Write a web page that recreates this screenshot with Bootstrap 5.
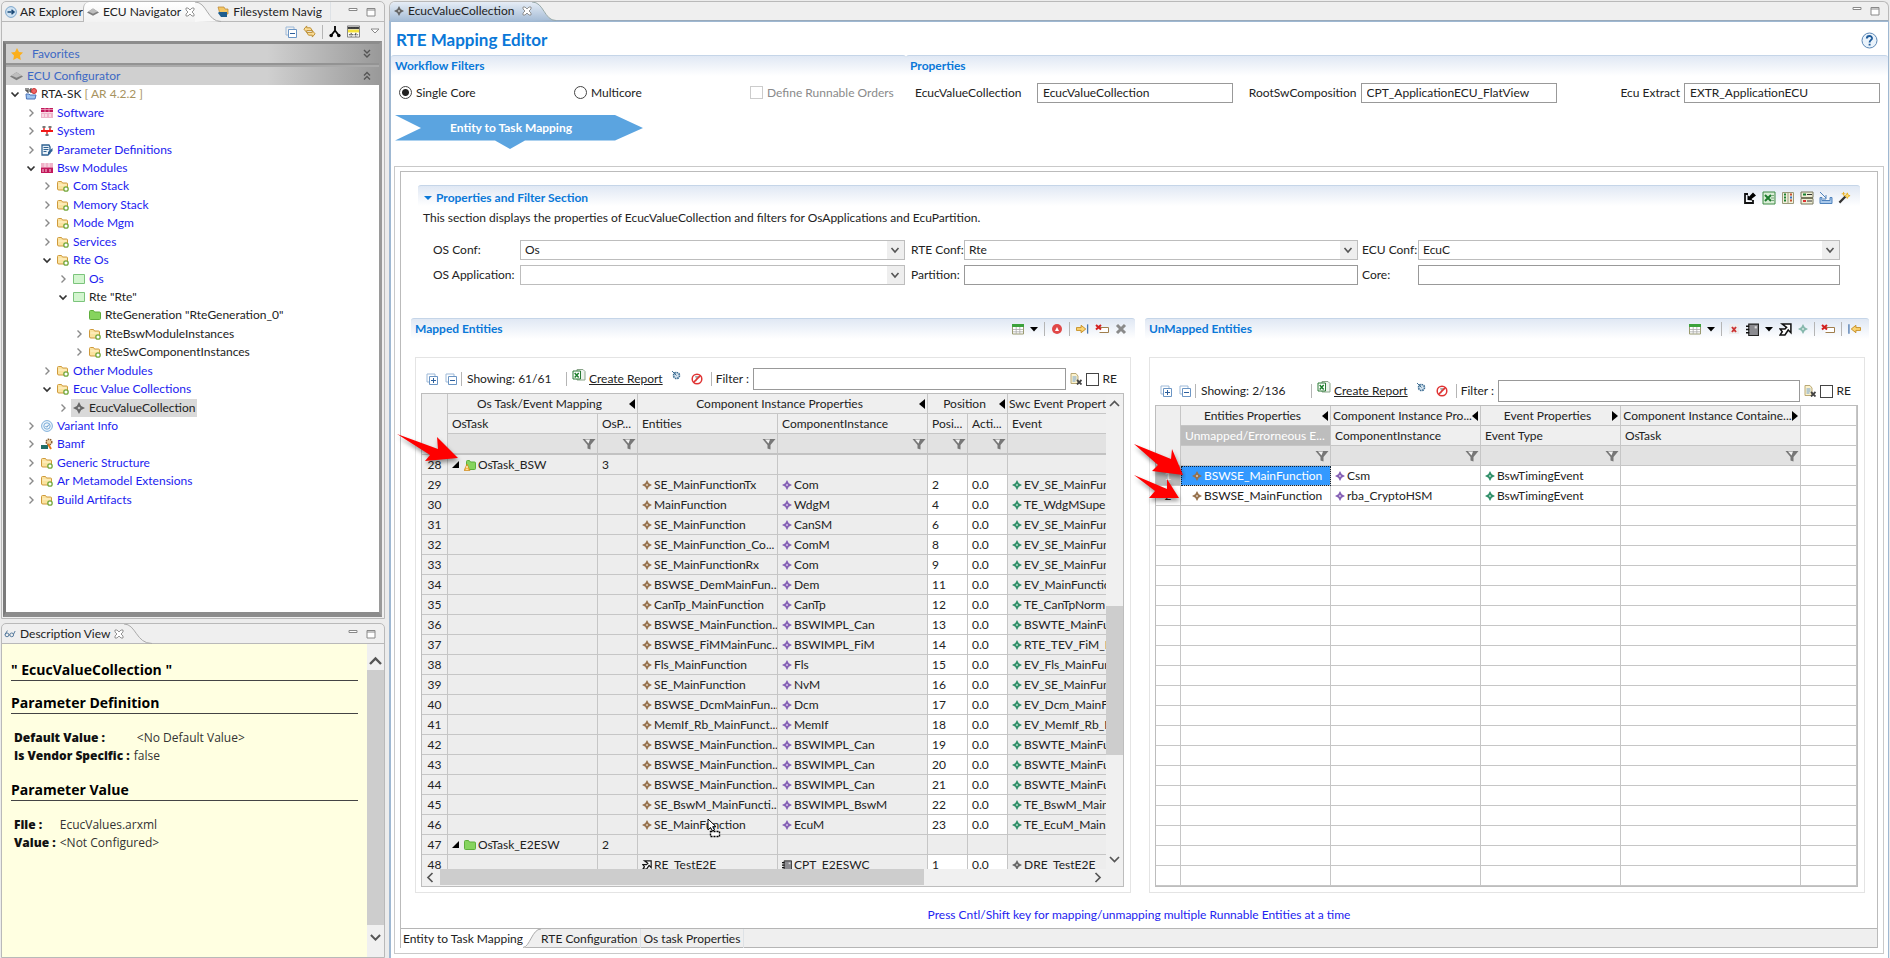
<!DOCTYPE html>
<html lang="en">
<head>
<meta charset="utf-8">
<meta name="viewport" content="width=device-width, initial-scale=1">
<title>RTE Mapping Editor</title>
<link href="https://cdn.jsdelivr.net/npm/bootstrap@5.3.0/dist/css/bootstrap.min.css" rel="stylesheet">
<style>
:root{--ui:Lato,"Open Sans",sans-serif;--doc:"Open Sans","Noto Sans",sans-serif;--head:#0a78d8}
body{font:12px/18px var(--ui);color:#222;background:#ececec;height:100vh;overflow:hidden}
svg{display:block;flex:none}
h1,h2,h3,p{margin:0}
button{border:0;background:none;padding:0;color:inherit}
a{color:inherit}
/* side column */
.side{flex:0 0 385px;padding:1px 0 0 1px}
.pane{border:1px solid #b9b9b9;border-radius:5px 5px 0 0;background:#efefef;width:384px}
.pane-nav{height:618px}
.strip{height:20px;border-bottom:1px solid #b9b9b9;line-height:20px;font-size:12px;white-space:nowrap}
.strip .on{background:linear-gradient(#fff,#f2f2f2);border-left:1px solid #b9b9b9;border-radius:6px 0 0 0;height:20px}
.toolrow{height:19px}
.sep{width:1px;height:14px;background:#b5b5b5;flex:none}
.shell{border:3px solid #8c8c8c;border-left-color:#7a7a7a;border-right-color:#9a9a9a;border-bottom-width:5px;background:#fff;margin:0 2px 1px 1px}
.drawer{height:21px;background:linear-gradient(90deg,#d0d0d0 70%,#9a9a9a);color:#3d69c4;line-height:20px;border-bottom:2px solid #939393;padding-left:4px}
.drawer + .drawer{border-bottom:0;border-top:2px solid #aaa;height:20px}
.tree{list-style:none;margin:0;padding:0;height:424px;display:grid;grid-auto-rows:1fr}
.tree li{display:flex;align-items:center;gap:4px;color:#1c1cf0;white-space:nowrap;padding-left:calc(3px + 16px * var(--lv))}
.tree .blk{color:#222}
.tree svg{width:12px;height:12px}
.tree .tw{color:#8a8a8a}
.tree .open{color:#333}
.picked{background:#d9d9d9;height:18px;padding:0 2px}
.note{background:#ffffe1;flex:1;padding:16px 8px 0 9px;color:#333;line-height:18px;font-family:var(--doc)}
.note h2{font-size:14px;line-height:20px;font-weight:700;color:#000;border-bottom:1px solid #444;margin-bottom:12px;width:347px;white-space:pre}
.note dl{margin:0 0 15px 3px;display:grid;grid-template-columns:max-content 1fr;column-gap:4px;padding-top:3px}
.note dt,.note dd{margin:0;white-space:nowrap}
.note dt{color:#111}
/* editor */
.ed{flex:1 1 0;min-width:0;margin:1px 1px 0 4px}
.edstrip{height:20px;border:1px solid #b9b9b9;border-bottom-color:#9ab;border-radius:6px 6px 0 0;background:#efefef}
.edtab{background:linear-gradient(#e6edf6,#a5bcd6);height:19px;line-height:18px;border-radius:5px 0 0 0}
.edbody{background:#fff;border:2px solid #9fb8d2;border-right-width:1px;border-top-width:1px;border-bottom-color:#9fb8d2}
.edbody h1{font:700 17px/33px var(--ui);padding-top:1px;height:33px;color:var(--head)}
.band{height:21px;background:linear-gradient(#e0e8f4,#fff);border-top:1px solid #c5d5e8;border-radius:3px 3px 0 0;color:var(--head);font:700 12px/20px var(--ui)}
.fld{height:20px;border:1px solid #999;border-radius:0;padding:0 5px;font:12px/18px var(--ui);color:#222;background:#fff;min-width:0;outline:0;width:100%}
select.fld{appearance:none;border-color:#bdbdbd;padding-left:4px;background:#fff url("data:image/svg+xml,%3Csvg xmlns='http://www.w3.org/2000/svg' width='17' height='18'%3E%3Cpath d='M0 0h17v18H0z' fill='%23eee'/%3E%3Cpath d='M4.500 7l3.500 4 3.500-4' fill='none' stroke='%23555' stroke-width='1.600'/%3E%3C/svg%3E") right center no-repeat}
.tick{appearance:none;width:13px;height:13px;border:1px solid #444;background:#fff;margin:0;flex:none}
.tick:disabled{border-color:#ccc}
.dot{appearance:none;width:13px;height:13px;border:1px solid #444;border-radius:50%;margin:0;flex:none}
.dot:checked{background:radial-gradient(circle,#222 0 3px,#fff 4px)}
.props{display:grid;grid-template-columns:515px 1fr}
.pf{display:grid;grid-template-columns:122px 196px 1fr 196px 1fr 196px;align-items:center;height:33px;padding:0 8px 0 9px}
.frame1{border:1px solid #c9c9c9;margin:17px 4px 4px 3px;padding:4px 5px 5px}
.frame2{border:1px solid #bbb;border-bottom:0}
.conf{display:grid;grid-template-columns:87px 385px 6px 53px 394px 4px 56px 422px;row-gap:5px;padding:13px 0 0 32px;align-items:center;white-space:nowrap}
.duo{display:grid;grid-template-columns:1fr 1fr;gap:10px;margin:33px 8px 0 10px}
.grp{border:1px solid #e4e4e4;margin:0 4px}
.bar{height:22px;padding:0 13px 0 10px;white-space:nowrap}
.gridbox{border:1px solid #bdbdbd;position:relative;margin:0 6px 5px 5px;background:#fff}
.gridbox table{table-layout:fixed;width:100%;border-collapse:separate;border-spacing:0}
.gridbox th,.gridbox td{height:20px;padding:0 0 0 4px;border:solid #c6c6c6;border-width:0 1px 1px 0;line-height:19px;font-weight:400;white-space:nowrap;overflow:hidden}
.gridbox th{background:#efefef}
.gridbox .flt th{background:#e2e2e2}
.gridbox .c{display:flex;align-items:center;gap:2px;height:19px;overflow:hidden}
.gridbox .c svg{width:10px;height:10px}
.gridbox .c svg.tri{width:8px;margin-right:2px}
.mapped td{background:#ededed}
.mapped td.w{background:#fff}
.mapped .flt th{border-bottom:2px solid #c2c2c2;height:21px}
.mapped th:last-child,.mapped td:last-child{border-right:0}
.gridbox .num{text-align:center;padding:0;background:#efefef}
.brown{color:#96714c}.purple{color:#8560b5}.green{color:#2f8f68}.grey{color:#666}
.clip{overflow:hidden;flex:1 1 0;min-width:0}
.sb{background:#f0f0f0;color:#555}
.over{position:absolute;z-index:3}
.unm td.sel{background:#3399ff;color:#fff;outline:1px dotted #123;outline-offset:-1px}
.unm td.num{background:#fff}
.unm td.num.cur{background:#b8b8b8;color:#eee}
.unm th.cur{background:#bdbdbd;color:#fff}
.unm th.e,.unm .flt th.e{background:#fff}
.tip{color:#2323f0;text-align:center;line-height:18px}
.ptabs{height:20px;background:#efefef;border-top:1px solid #b5b5b5;border-bottom:1px solid #b5b5b5;line-height:18px}
.ptabs button{height:19px;line-height:18px;font:12px/18px var(--ui)}
.count{width:104px;padding-left:5px}
.unm-bar .count{width:115px}
</style>
</head>
<body class="d-flex">
<svg width="0" height="0" class="position-absolute" aria-hidden="true">
<defs>
<symbol id="dia" viewBox="0 0 12 12"><path d="M6 0l2.100 3.900L12 6 8.100 8.100 6 12 3.900 8.100 0 6l3.900-2.100z" fill="currentColor"/><circle cx="6" cy="6" r="1.300" fill="#fff" opacity=".6"/></symbol>
<symbol id="fold" viewBox="0 0 12 12"><path d="M.5 2.500q0-1 1-1h3l1 1.500h4q1 0 1 1v5q0 1-1 1H2q-1.500 0-1.500-1z" fill="#fbe3a0" stroke="#cf9a3c"/><path d="M1.500 5h8" stroke="#fff3cc"/><circle cx="9" cy="9" r="2.200" fill="#fff" stroke="#74a83c" stroke-width="1.300"/></symbol>
<symbol id="gbox" viewBox="0 0 12 12"><path d="M.5 1.500h11v9H.5z" fill="#d3f5cf" stroke="#7cc47c"/></symbol>
<symbol id="gfold" viewBox="0 0 12 12"><path d="M.5 2.500q0-1 1-1h3l1 1.500h5q1 0 1 1v5.500q0 1-1 1h-9q-1 0-1-1z" fill="#86d45e" stroke="#5fae3c"/></symbol>
<symbol id="wfold" viewBox="0 0 12 12"><path d="M2.500 2.500q0-1 1-1h2l1 1.500h4q1 0 1 1v5.500q0 1-1 1h-7q-1 0-1-1z" fill="#86d45e" stroke="#5fae3c"/><path d="M3 5l3 6.500H0z" fill="#f6b73c" stroke="#c98213" stroke-width=".6"/><path d="M3 7v2.200M3 10v1" stroke="#fff"/></symbol>
<symbol id="shut" viewBox="0 0 12 12"><path d="M4.500 2.500L8 6 4.500 9.500" fill="none" stroke="currentColor" stroke-width="1.400"/></symbol>
<symbol id="open" viewBox="0 0 12 12"><path d="M2.500 4.500L6 8l3.500-3.500" fill="none" stroke="currentColor" stroke-width="1.700"/></symbol>
<symbol id="none" viewBox="0 0 12 12"></symbol>
<symbol id="root" viewBox="0 0 12 12"><path d="M1 0v3h2M3 0v5M5 1v3M6 0v5" stroke="#222" fill="none"/><circle cx="9" cy="3" r="2.500" fill="#e66" stroke="#c33"/><path d="M1 6h3l1 1h6l-1 4H1.500z" fill="#9cc3f0" stroke="#4a72b8"/></symbol>
<symbol id="sw" viewBox="0 0 12 12"><path d="M0 1h12v4H0z" fill="#c2185b"/><path d="M4 1v4M8 1v4M0 2.500h12" stroke="#f2b5cc" stroke-width=".7"/><path d="M0 5.500h12V11H0z" fill="#efb3c9"/><path d="M2 7v3M5 7v3M9 7v3" stroke="#fff"/></symbol>
<symbol id="bsw" viewBox="0 0 12 12"><path d="M0 1h12v4.500H0z" fill="#efb3c9"/><path d="M4 1v4M8 1v4" stroke="#fff" stroke-width=".7"/><path d="M0 5.500h12V11H0z" fill="#c2185b"/><path d="M2 7v3M5 7v3M9 7v3" stroke="#f7cfde"/></symbol>
<symbol id="sys" viewBox="0 0 12 12"><path d="M0 6h12" stroke="#f01818" stroke-width="2"/><path d="M3 5V3M9 5V3M6 7v2" stroke="#f01818" stroke-width="1.400"/><path d="M1.500 1h3v2h-3zM7.500 1h3v2h-3zM4.500 9h3v2h-3z" fill="#777"/></symbol>
<symbol id="par" viewBox="0 0 12 12"><path d="M1 1h7l1 2v6l-2 2H1z" fill="#e9f1f8" stroke="#2f6291" stroke-width="1.300"/><path d="M2.500 3.500h5M2.500 5.500h5M2.500 7.500h3" stroke="#2f6291"/><path d="M11.500 4v3L7 11V8z" fill="#2f6291"/></symbol>
<symbol id="vari" viewBox="0 0 12 12"><circle cx="6" cy="6" r="5.400" fill="#eef6fc" stroke="#6fa6d6" stroke-width=".9"/><circle cx="6" cy="6" r="3.200" fill="none" stroke="#6fa6d6" stroke-width=".9"/><path d="M4.500 6l1.200 1.200L8 4.500" stroke="#5b92c8" fill="none"/></symbol>
<symbol id="bamf" viewBox="0 0 12 12"><circle cx="8" cy="4" r="2.800" fill="#ead2a0" stroke="#8a5c30" stroke-width="1.500" stroke-dasharray="1.500 .8"/><path d="M0 7h7v4H0z" fill="#1f6f68"/><path d="M7 6l3 5" stroke="#e67a1c" stroke-width="2"/></symbol>
<symbol id="chip" viewBox="0 0 14 10"><path d="M0 5.500l7-4.500 7 4.500L7 9.500z" fill="#7d7d7d"/><path d="M1.500 4.500l5.500-3.500 5.500 3.500-5.500 2.500z" fill="#bdbdbd"/></symbol>
<symbol id="plus" viewBox="0 0 12 12"><path d="M1 1h8v2M1 1v8h2" fill="none" stroke="#9db9d8"/><path d="M3.500 3.500h8v8h-8z" fill="#fff" stroke="#6b95c4"/><path d="M5 7.500h5M7.500 5v5" stroke="#2c5f9c"/></symbol>
<symbol id="minus" viewBox="0 0 12 12"><path d="M1 1h8v2M1 1v8h2" fill="none" stroke="#9db9d8"/><path d="M3.500 3.500h8v8h-8z" fill="#fff" stroke="#6b95c4"/><path d="M5 7.500h5" stroke="#2c5f9c"/></symbol>
<symbol id="cross" viewBox="0 0 10 10"><path d="M1 1h2l2 2 2-2h2v2L7 5l2 2v2H7L5 7 3 9H1V7l2-2-2-2z" fill="#fff" stroke="#888" stroke-width=".9"/></symbol>
<symbol id="min" viewBox="0 0 10 10"><path d="M1 1.500h8v2H1z" fill="#fff" stroke="#888"/></symbol>
<symbol id="max" viewBox="0 0 10 10"><path d="M1 1.500h8v7.500H1zM1 3h8" fill="#fff" stroke="#888"/></symbol>
<symbol id="funnel" viewBox="0 0 14 12"><path d="M.5 1h13L8.500 7v4.500l-3-1V7z" fill="#777"/><path d="M3 1.500h5L6.500 5.500z" fill="#f4f4f4"/></symbol>
<symbol id="xls" viewBox="0 0 14 14"><path d="M5 1.500h6l2 2V12H5z" fill="#eef3ee" stroke="#8aa58a"/><path d="M1 3h7.500v8H1z" fill="#fff" stroke="#2a7b35"/><path d="M2.700 5l4 4.500M6.700 5l-4 4.500" stroke="#1d7f2c" stroke-width="1.500"/></symbol>
<symbol id="gear" viewBox="0 0 10 10"><circle cx="5.500" cy="5.500" r="3" fill="#d5e3ee" stroke="#3f6f94" stroke-width="1.600" stroke-dasharray="1.600 .7"/><path d="M1 1l4.500 4.500" stroke="#3f6f94"/></symbol>
<symbol id="ban" viewBox="0 0 12 12"><path d="M4 3h5l-3 3v3" fill="#aaa"/><circle cx="6" cy="6" r="4.800" fill="none" stroke="#e03434" stroke-width="1.500"/><path d="M2.600 9.400l6.800-6.800" stroke="#e03434" stroke-width="1.500"/></symbol>
<symbol id="doc" viewBox="0 0 12 12"><path d="M1 .5h5l2 2.500v7.500H1z" fill="#fdf3cc" stroke="#b9a877"/><path d="M2.500 4h4M2.500 6h4M2.500 8h3" stroke="#6f9fd0"/><path d="M7 7l4.500 4.500M11.500 7L7 11.500" stroke="#444" stroke-width="1.800"/></symbol>
<symbol id="tbl" viewBox="0 0 12 12"><path d="M.5 1.500h11v9.500H.5z" fill="#fff" stroke="#9a9a70"/><path d="M4.200 4v7M7.800 4v7M1 6.500h10M1 8.800h10" stroke="#aaa" stroke-width=".8"/><path d="M0 1h12v3H0z" fill="#3ca23c"/></symbol>
<symbol id="drop" viewBox="0 0 8 8"><path d="M0 2h8L4 6.500z" fill="#000"/></symbol>
<symbol id="err" viewBox="0 0 12 12"><circle cx="6" cy="6" r="5" fill="#e04848"/><path d="M4 8l2-4 2 4z" fill="#fff"/></symbol>
<symbol id="fwd" viewBox="0 0 14 12"><path d="M.5 4.500h5V2l5 4-5 4V7.500h-5z" fill="#fbd574" stroke="#c58b1f"/><path d="M12.500 1v10" stroke="#4a76ae" stroke-width="1.400"/></symbol>
<symbol id="back" viewBox="0 0 14 12"><path d="M13.500 4.500h-5V2l-5 4 5 4V7.500h5z" fill="#fbd574" stroke="#c58b1f"/><path d="M1 1v10" stroke="#4a76ae" stroke-width="1.400"/></symbol>
<symbol id="del" viewBox="0 0 14 12"><path d="M4.500 4.500h9v5h-9" fill="#fff" stroke="#a07e4d"/><path d="M1 2l5 4.500M6 2L1 6.500" stroke="#d42020" stroke-width="2"/></symbol>
<symbol id="bigx" viewBox="0 0 12 12"><path d="M2 2l8 8M10 2l-8 8" stroke="#8a8a8a" stroke-width="3"/></symbol>
<symbol id="redx" viewBox="0 0 12 12"><path d="M1 1h10v10H1z" fill="#eee"/><path d="M4 4l4 5M8 4L4 9" stroke="#c33" stroke-width="2"/></symbol>
<symbol id="swc" viewBox="0 0 12 12"><path d="M2.500 1h9v10.500h-9z" fill="#8b8b90" stroke="#222"/><path d="M0 3h3M0 6h3M0 9h3" stroke="#111" stroke-width="1.500"/><path d="M8 3h2v2H8z" fill="#ddd"/></symbol>
<symbol id="re" viewBox="0 0 12 12"><path d="M3 1h8v8L8.500 6.500 5.500 11H1l2-3-2-2.500h4.500L7 4z" fill="#fff" stroke="#111" stroke-width="1.400"/></symbol>
<symbol id="imp" viewBox="0 0 14 14"><path d="M5 3H2v9h8V9" fill="none" stroke="#111" stroke-width="1.800"/><path d="M4.500 9V4l1.700 1.600L10 1.500 13 4.500 8.500 8 10 9.500z" fill="#000"/></symbol>
<symbol id="xl2" viewBox="0 0 14 14"><path d="M1 1h12v12H1z" fill="#d9edd6" stroke="#3d8a45"/><path d="M3 4l6 6M9 4l-6 6" stroke="#1c7b2c" stroke-width="2"/><path d="M9 4.500h3M9 7h3M9 9.500h3" stroke="#76a67a"/></symbol>
<symbol id="cols" viewBox="0 0 14 14"><path d="M1.500 1.500h11v11h-11zM7 1.500v11" fill="#f1f0dc" stroke="#9a9a7a"/><path d="M3 3.500h2M3 6.500h2M3 9.500h2" stroke="#1d8030" stroke-width="2"/><path d="M9 3.500h2M9 9.500h2" stroke="#c3502f" stroke-width="2"/><path d="M9 6.500h2" stroke="#3c6fc0" stroke-width="2"/></symbol>
<symbol id="rows" viewBox="0 0 14 14"><path d="M1 1h12v5.500H1zM1 7.500h12V13H1z" fill="#efeed5" stroke="#77775d"/><path d="M3 3.500h3" stroke="#168030" stroke-width="2"/><path d="M3 10h3" stroke="#d33" stroke-width="2"/><path d="M7 3.500h5M7 10h5" stroke="#333"/></symbol>
<symbol id="tray" viewBox="0 0 14 14"><path d="M1 6.500v6h12v-6h-2v3H3v-3z" fill="#a9c8ea" stroke="#4f82bd"/><path d="M1 1l6 6M7 4v4H4" stroke="#4f82bd" fill="none"/></symbol>
<symbol id="wand" viewBox="0 0 14 14"><path d="M1.500 12.500L8 6" stroke="#333" stroke-width="2.400"/><path d="M6 1v4M4 3h4M10 2l1 2.500L13 5l-2 1-1 2-1-2-2-1 2-.5z" stroke="#e8b021" fill="#ffe27a"/></symbol>
<symbol id="ar" viewBox="0 0 12 12"><circle cx="6" cy="6" r="5.400" fill="#cfe2f2" stroke="#7ca6cb"/><path d="M2.500 6h6M6.500 3.800L9 6 6.500 8.200" stroke="#1d4b78" fill="none" stroke-width="1.500"/></symbol>
<symbol id="fs" viewBox="0 0 12 12"><path d="M1 1h6l1 2h3v5H3z" fill="#f3c664" stroke="#b9832c" stroke-width=".7"/><path d="M2 6h8v5H4l-3-4z" fill="#1d5d8f"/></symbol>
<symbol id="link" viewBox="0 0 14 14"><path d="M1 4.500L4 1v2h4l2 3H4v2zM13 9.500L10 13v-2H6L4 8h6V6z" fill="#fbdc94" stroke="#b98a2e"/></symbol>
<symbol id="fork" viewBox="0 0 12 12"><path d="M6 0v5M6 4.500L2.500 9M6 4.500L9.500 9" stroke="#000" stroke-width="1.800" fill="none"/><circle cx="2.200" cy="9.500" r="1.800"/><circle cx="9.800" cy="9.500" r="1.800"/></symbol>
<symbol id="ruler" viewBox="0 0 14 14"><path d="M.5 1h13v12H.5z" fill="#fff" stroke="#777"/><path d="M1 2h12v2.500H1z" fill="#444"/><path d="M1 5h12v3H1z" fill="#f5e23a"/><path d="M2 10.500h10M4.500 8.500v4M9.500 8.500v4M1 3h12" stroke="#333" stroke-dasharray="2 1"/></symbol>
<symbol id="specs" viewBox="0 0 14 10"><circle cx="3.500" cy="6" r="2.200" fill="none" stroke="#426a92"/><circle cx="9" cy="6" r="2.200" fill="none" stroke="#426a92"/><path d="M1.300 5.500L4 1M5.700 6h1M11 5.500l2-4" stroke="#426a92" fill="none"/></symbol>
</defs>
</svg>

<aside class="side d-flex flex-column">
  <section class="pane pane-nav d-flex flex-column">
    <div class="strip d-flex align-items-center">
      <svg style="margin-left:3px" width="12" height="12"><use href="#ar"/></svg><span style="width:66px;padding-left:3px">AR Explorer</span>
      <div class="on d-flex align-items-center" style="padding-left:3px"><svg width="12" height="10"><use href="#chip"/></svg><span class="ms-1">ECU Navigator</span><svg class="ms-1" width="10" height="10"><use href="#cross"/></svg></div>
      <svg style="margin-right:-4px" width="26" height="20" viewBox="0 0 26 20"><path d="M0 0C12 0 12 19.500 26 19.500L0 20z" fill="#f8f8f8"/><path d="M0 0C12 0 12 19.500 26 19.500" fill="none" stroke="#aaa"/></svg>
      <svg width="12" height="12"><use href="#fs"/></svg><span class="ms-1 pe-2 border-end">Filesystem Navig</span>
      <span class="ms-auto d-flex gap-2 pe-2"><svg width="10" height="10"><use href="#min"/></svg><svg width="10" height="10"><use href="#max"/></svg></span>
    </div>
    <div class="toolrow d-flex align-items-center justify-content-end pe-1" style="gap:6px">
      <svg width="12" height="12"><use href="#minus"/></svg><svg width="13" height="13"><use href="#link"/></svg><span class="sep"></span><svg width="12" height="12"><use href="#fork"/></svg><svg width="13" height="13"><use href="#ruler"/></svg>
      <svg class="ms-1" width="10" height="10" viewBox="0 0 10 10"><path d="M1 2h8L5 6z" fill="#fff" stroke="#888"/></svg>
    </div>
    <div class="shell flex-grow-1">
      <div class="drawer d-flex align-items-center"><svg width="14" height="14" viewBox="0 0 14 14"><path d="M7 1l2 4 4 .5-3 3 .8 4.500L7 11l-3.800 2 .8-4.500-3-3L5 5z" fill="#fbaf1c"/></svg><span class="ms-1 ps-1">Favorites</span><svg class="ms-auto me-2" width="8" height="10" viewBox="0 0 8 10"><path d="M1 1l3 3 3-3M1 5l3 3 3-3" fill="none" stroke="#555" stroke-width="1.400"/></svg></div>
      <div class="drawer d-flex align-items-center"><svg width="13" height="10"><use href="#chip"/></svg><span class="ms-1">ECU Configurator</span><svg class="ms-auto me-2" width="8" height="10" viewBox="0 0 8 10"><path d="M1 4.500l3-3 3 3M1 8.500l3-3 3 3" fill="none" stroke="#555" stroke-width="1.400"/></svg></div>
      <ul class="tree" id="tree"></ul>
    </div>
  </section>
  <section class="pane flex-grow-1 d-flex flex-column mt-1">
    <div class="strip d-flex align-items-center">
      <svg style="margin-left:2px" width="12" height="10"><use href="#specs"/></svg><span class="ms-1">Description View</span><svg class="ms-1" width="10" height="10"><use href="#cross"/></svg>
      <svg width="28" height="20" viewBox="0 0 28 20"><path d="M0 0C12 0 12 19.500 28 19.500" fill="none" stroke="#aaa"/></svg>
      <span class="ms-auto d-flex gap-2 pe-2"><svg width="10" height="10"><use href="#min"/></svg><svg width="10" height="10"><use href="#max"/></svg></span>
    </div>
    <div class="d-flex flex-grow-1">
      <div class="note">
        <h2>" EcucValueCollection "</h2>
        <h2>Parameter Definition</h2>
        <dl><dt><b>Default Value :</b></dt><dd>&nbsp;&lt;No Default Value&gt;</dd><dt><b>Is Vendor Specific :</b></dt><dd>false</dd></dl>
        <h2>Parameter Value</h2>
        <dl><dt><b>File :</b></dt><dd>EcucValues.arxml</dd><dt><b>Value :</b></dt><dd>&lt;Not Configured&gt;</dd></dl>
      </div>
      <div class="sb d-flex flex-column" style="width:17px">
        <svg class="mt-2" width="17" height="18" viewBox="0 0 17 18"><path d="M3 12l5.500-5.500L14 12" fill="none" stroke="#555" stroke-width="2.400"/></svg>
        <div class="flex-grow-1" style="background:#cdcdcd"></div>
        <svg class="mb-2 pb-1" width="17" height="24" viewBox="0 0 17 24"><path d="M3 12l5.500 5.500L14 12" fill="none" stroke="#555" stroke-width="2.400"/></svg>
      </div>
    </div>
  </section>
</aside>

<main class="ed d-flex flex-column">
  <div class="edstrip d-flex align-items-center flex-shrink-0">
    <div class="edtab d-flex align-items-center"><svg class="ms-1" width="10" height="10" style="color:#666"><use href="#dia"/></svg><span class="ms-1">EcucValueCollection</span><svg class="ms-2" width="10" height="10"><use href="#cross"/></svg></div>
    <svg width="24" height="19" viewBox="0 0 24 19"><defs><linearGradient id="tabg" x2="0" y2="1"><stop stop-color="#e6edf6"/><stop offset="1" stop-color="#a5bcd6"/></linearGradient></defs><path d="M0 0C12 0 12 18.500 24 18.500L0 19z" fill="url(#tabg)"/><path d="M0 0C12 0 12 18.500 24 18.500" fill="none" stroke="#9aa"/></svg>
    <span class="ms-auto d-flex gap-2 pe-2"><svg width="10" height="10"><use href="#min"/></svg><svg width="10" height="10"><use href="#max"/></svg></span>
  </div>
  <div class="edbody flex-grow-1 d-flex flex-column">
    <div class="d-flex align-items-center justify-content-between" style="padding:0 10px 0 5px"><h1>RTE Mapping Editor</h1>
      <button class="mt-1" aria-label="Help"><svg width="17" height="17" viewBox="0 0 17 17"><circle cx="8.500" cy="8.500" r="7.500" fill="#eaf3fb" stroke="#5b87b5"/><path d="M5.800 6.500C6 3 11.200 3.300 11 6.400c-.2 1.800-2.400 1.800-2.400 4M8.600 11.800v1.800" fill="none" stroke="#1f5b9a" stroke-width="1.900"/></svg></button></div>
    <div class="props">
      <div><h2 class="band ps-1">Workflow Filters</h2>
        <div class="d-flex align-items-center" style="height:33px;padding-left:8px">
          <label class="d-flex align-items-center gap-1" style="width:175px"><input class="dot" type="radio" name="core" checked>Single Core</label>
          <label class="d-flex align-items-center gap-1" style="width:176px"><input class="dot" type="radio" name="core">Multicore</label>
          <label class="d-flex align-items-center gap-1 text-nowrap" style="color:#8a8a8a"><input class="tick" type="checkbox" disabled>Define Runnable Orders</label>
        </div></div>
      <div><h2 class="band ps-1">Properties</h2>
        <div class="pf">
          <label for="p1">EcucValueCollection</label><input id="p1" class="fld" value="EcucValueCollection">
          <label for="p2" class="text-end pe-1">RootSwComposition</label><input id="p2" class="fld" value="CPT_ApplicationECU_FlatView">
          <label for="p3" class="text-end pe-1">Ecu Extract</label><input id="p3" class="fld" value="EXTR_ApplicationECU">
        </div></div>
    </div>
    <button class="mt-1 ms-1 position-relative align-self-start" style="width:248px;height:36px">
      <svg width="248" height="36" viewBox="0 0 248 36"><path d="M0 2h220l28 13-28 12.500h-90L115 36l-15-8.500H0L26 15z" fill="#5ba4e0"/></svg>
      <span class="position-absolute top-0 start-0 w-100 text-white fw-bold" style="line-height:30px;padding-right:16px">Entity to Task Mapping</span></button>
    <div class="frame1 flex-grow-1 d-flex flex-column">
     <div class="frame2 flex-grow-1 d-flex flex-column">
      <div style="margin:13px 17px 0 17px">
        <div class="band d-flex align-items-center" style="padding:4px 9px 0 6px"><svg width="8" height="6" viewBox="0 0 8 6"><path d="M0 1h8L4 5z" fill="#0a78d8"/></svg><h2 class="m-0 ps-1" style="font:inherit">Properties and Filter Section</h2>
          <span class="ms-auto d-flex" style="gap:5px"><svg width="14" height="14"><use href="#imp"/></svg><svg width="14" height="14"><use href="#xl2"/></svg><svg width="14" height="14"><use href="#cols"/></svg><svg width="14" height="14"><use href="#rows"/></svg><svg width="14" height="14"><use href="#tray"/></svg><svg width="13" height="13"><use href="#wand"/></svg></span></div>
        <p style="padding:3px 0 0 5px">This section displays the properties of EcucValueCollection and filters for OsApplications and EcuPartition.</p>
      </div>
      <div class="conf">
        <label for="s1">OS Conf:</label><select id="s1" class="fld"><option>Os</option></select><i></i>
        <label for="s2">RTE Conf:</label><select id="s2" class="fld"><option>Rte</option></select><i></i>
        <label for="s3">ECU Conf:</label><select id="s3" class="fld"><option>EcuC</option></select>
        <label for="s4">OS Application:</label><select id="s4" class="fld"><option></option></select><i></i>
        <label for="s5">Partition:</label><input id="s5" class="fld"><i></i>
        <label for="s6">Core:</label><input id="s6" class="fld">
      </div>
      <div class="duo flex-grow-1">
        <section class="d-flex flex-column">
          <div class="band d-flex align-items-center ps-1 pe-2"><h2 class="m-0" style="font:inherit">Mapped Entities</h2>
            <span class="ms-auto d-flex align-items-center" style="gap:6px"><svg width="12" height="12"><use href="#tbl"/></svg><svg width="8" height="8"><use href="#drop"/></svg><span class="sep"></span><svg width="12" height="12"><use href="#err"/></svg><span class="sep"></span><svg width="13" height="12"><use href="#fwd"/></svg><svg width="14" height="12"><use href="#del"/></svg><svg width="12" height="12"><use href="#bigx"/></svg></span></div>
          <div class="grp flex-grow-1 d-flex flex-column" style="margin-top:18px;padding-top:10px">
            <div class="bar d-flex align-items-center" data-bar="61/61" data-id="f1"></div>
            <div class="gridbox mapped flex-grow-1 d-flex flex-column" style="margin-top:3px">
              <div class="d-flex flex-grow-1" style="height:0">
                <div class="clip"><table>
                  <colgroup><col style="width:26px"><col style="width:150px"><col style="width:40px"><col style="width:140px"><col style="width:150px"><col style="width:40px"><col style="width:40px"><col></colgroup>
                  <thead>
                  <tr><th class="num" rowspan="3"></th><th colspan="2" data-h="Os Task/Event Mapping"></th><th colspan="2" data-h="Component Instance Properties"></th><th colspan="2" data-h="Position"></th><th style="padding-left:1px">Swc Event Propert</th></tr>
                  <tr><th>OsTask</th><th>OsP...</th><th>Entities</th><th>ComponentInstance</th><th>Posi...</th><th>Acti...</th><th>Event</th></tr>
                  <tr class="flt"><th data-f></th><th data-f></th><th data-f></th><th data-f></th><th data-f></th><th data-f></th><th></th></tr>
                  </thead><tbody id="rows1"></tbody></table></div>
                <div class="sb d-flex flex-column" style="width:17px">
                  <svg width="17" height="20" viewBox="0 0 17 20"><path d="M4 12l4.500-4.500L13 12" fill="none" stroke="#555" stroke-width="1.700"/></svg>
                  <div style="flex:193"></div><div style="flex:150;background:#cdcdcd"></div><div style="flex:95"></div>
                  <svg width="17" height="20" viewBox="0 0 17 20"><path d="M4 8l4.500 4.500L13 8" fill="none" stroke="#555" stroke-width="1.700"/></svg>
                </div>
              </div>
              <div class="sb d-flex" style="height:17px;padding-right:17px">
                <svg width="18" height="17" viewBox="0 0 18 17"><path d="M10.500 4L6 8.500l4.500 4.500" fill="none" stroke="#555" stroke-width="1.700"/></svg>
                <div style="flex:485;background:#cdcdcd;height:16px"></div><div style="flex:164"></div>
                <svg width="18" height="17" viewBox="0 0 18 17"><path d="M7.500 4L12 8.500 7.500 13" fill="none" stroke="#555" stroke-width="1.700"/></svg>
              </div>
              <svg class="over" style="left:-27px;top:37px" width="72" height="40" viewBox="0 0 72 40"><path d="M2 3l41 15-1-12 21 21-33 3 5-6z" fill="#f00" style="filter:drop-shadow(1px 3px 2px #0006)"/></svg>
            </div>
          </div>
        </section>
        <section class="d-flex flex-column">
          <div class="band d-flex align-items-center ps-1 pe-2"><h2 class="m-0" style="font:inherit">UnMapped Entities</h2>
            <span class="ms-auto d-flex align-items-center" style="gap:6px"><svg width="12" height="12"><use href="#tbl"/></svg><svg width="8" height="8"><use href="#drop"/></svg><span class="sep"></span><svg width="12" height="12"><use href="#redx"/></svg><svg width="13" height="13"><use href="#swc"/></svg><svg width="8" height="8"><use href="#drop"/></svg><svg width="13" height="13"><use href="#re"/></svg><svg width="10" height="10" style="color:#86b8ad"><use href="#dia"/></svg><span class="sep"></span><svg width="14" height="12"><use href="#del"/></svg><span class="sep"></span><svg width="13" height="12"><use href="#back"/></svg></span></div>
          <div class="grp flex-grow-1 d-flex flex-column" style="margin-top:18px;padding-top:22px">
            <div class="bar unm-bar d-flex align-items-center" data-bar="2/136" data-id="f2"></div>
            <div class="gridbox unm flex-grow-1" style="margin-top:3px">
              <div class="h-100 overflow-hidden"><table>
                <colgroup><col style="width:25px"><col style="width:150px"><col style="width:150px"><col style="width:140px"><col style="width:180px"><col></colgroup>
                <thead>
                <tr><th class="num" rowspan="3"></th><th data-h="Entities Properties"></th><th data-h="Component Instance Pro..." ></th><th data-h="Event Properties" data-r></th><th data-h="Component Instance Containe..." data-r></th><th class="e"></th></tr>
                <tr><th class="cur">Unmapped/Errorneous E...</th><th>ComponentInstance</th><th>Event Type</th><th>OsTask</th><th class="e"></th></tr>
                <tr class="flt"><th data-f></th><th data-f></th><th data-f></th><th data-f></th><th class="e"></th></tr>
                </thead><tbody id="rows2"></tbody></table></div>
              <svg class="over" style="left:-24px;top:35px" width="54" height="64" viewBox="0 0 54 64"><g fill="#f00" style="filter:drop-shadow(1px 3px 2px #0006)"><path d="M2 3l37 15 1-10 11 26-31-4 6-6z"/><path d="M2 34l33 14 0-10 12 19-30 0 6-7z"/></g></svg>
            </div>
          </div>
        </section>
      </div>
      <p class="tip" style="padding:13px 0 4px">Press Cntl/Shift key for mapping/unmapping multiple Runnable Entities at a time</p>
      <div class="ptabs d-flex">
        <button class="bg-white" style="padding-left:2px">Entity to Task Mapping</button>
        <svg width="18" height="19" viewBox="0 0 18 19"><path d="M0 19C7 19 9 0 18 0H0z" fill="#fff"/><path d="M0 18.500C7 18 9 0 18 0" fill="none" stroke="#aaa"/></svg>
        <button class="border-end" style="padding-right:2px">RTE Configuration</button><button class="border-end" style="padding:0 3px">Os task Properties</button>
      </div>
     </div>
    </div>
  </div>
</main>

<script src="https://cdn.jsdelivr.net/npm/bootstrap@5.3.0/dist/js/bootstrap.bundle.min.js"></script>
<script>
const ic=(n,w=12,h=w,c='')=>`<svg class="${c}" width="${w}" height="${h}"><use href="#${n}"/></svg>`;
// level, twisty, icon, label, style
const tree=[[0,'open','root','RTA-SK','root'],[1,'shut','sw','Software'],[1,'shut','sys','System'],[1,'shut','par','Parameter Definitions'],[1,'open','bsw','Bsw Modules'],
[2,'shut','fold','Com Stack'],[2,'shut','fold','Memory Stack'],[2,'shut','fold','Mode Mgm'],[2,'shut','fold','Services'],[2,'open','fold','Rte Os'],
[3,'shut','gbox','Os'],[3,'open','gbox','Rte "Rte"','blk'],[4,'none','gfold','RteGeneration "RteGeneration_0"','blk'],[4,'shut','fold','RteBswModuleInstances','blk'],[4,'shut','fold','RteSwComponentInstances','blk'],
[2,'shut','fold','Other Modules'],[2,'open','fold','Ecuc Value Collections'],[3,'shut','dia','EcucValueCollection','sel'],
[1,'shut','vari','Variant Info'],[1,'shut','bamf','Bamf'],[1,'shut','fold','Generic Structure'],[1,'shut','fold','Ar Metamodel Extensions'],[1,'shut','fold','Build Artifacts']];
document.getElementById('tree').innerHTML=tree.map(([l,t,i,s,k])=>{
  const tw=ic(t,12,12,'tw '+t);
  if(k==='sel')return `<li class="blk" style="--lv:${l}">${tw}<span class="picked d-flex align-items-center gap-1" style="margin-left:-2px">${ic(i,12,12,'grey')}${s}</span></li>`;
  const tail=k==='root'?' <span style="color:#a8935e">[ AR 4.2.2 ]</span>':'';
  return `<li class="${k?'blk':''}" style="--lv:${l}">${tw}${ic(i)}<span>${s}${tail}</span></li>`}).join('');

document.querySelectorAll('[data-bar]').forEach(b=>{const id=b.dataset.id;
b.innerHTML=`<button aria-label="Expand all">${ic('plus')}</button><button class="ms-1 me-1" style="padding-left:3px" aria-label="Collapse all">${ic('minus')}</button><span class="sep"></span><span class="count">Showing: ${b.dataset.bar}</span><span class="sep"></span><span class="pb-2" style="padding:0 3px 0 5px">${ic('xls',14)}</span><a href="#">Create Report</a><span class="pb-2 ps-2">${ic('gear',10)}</span><button class="mx-2" style="padding-left:2px" aria-label="Clear filters">${ic('ban')}</button><span class="sep"></span><label class="px-1" for="${id}">Filter :</label><input id="${id}" class="fld flex-grow-1" style="height:22px;width:0"><span class="ps-1 pe-1">${ic('doc')}</span><label class="d-flex align-items-center gap-1"><input type="checkbox" class="tick">RE</label>`});

document.querySelectorAll('[data-h]').forEach(h=>{const r='r' in h.dataset;
h.style.padding='0 2px';h.innerHTML=`<div class="c" style="gap:0"><span class="flex-grow-1 text-center">${h.dataset.h}</span><svg style="width:6px;height:10px" viewBox="0 0 6 10"><path d="${r?'M0 0v10l6-5z':'M6 0v10L0 5z'}"/></svg></div>`});
document.querySelectorAll('[data-f]').forEach(h=>h.innerHTML=`<div class="d-flex justify-content-end" style="padding-right:1px">${ic('funnel',14,12)}</div>`);

const rows=[[28,'g','OsTask_BSW',3,'wfold'],[29,'SE_MainFunctionTx','Com',2,'EV_SE_MainFun'],[30,'MainFunction','WdgM',4,'TE_WdgMSupe'],[31,'SE_MainFunction','CanSM',6,'EV_SE_MainFun'],
[32,'SE_MainFunction_Co...','ComM',8,'EV_SE_MainFun'],[33,'SE_MainFunctionRx','Com',9,'EV_SE_MainFun'],[34,'BSWSE_DemMainFun...','Dem',11,'EV_MainFunctic'],[35,'CanTp_MainFunction','CanTp',12,'TE_CanTpNorm'],
[36,'BSWSE_MainFunction...','BSWIMPL_Can',13,'BSWTE_MainFu'],[37,'BSWSE_FiMMainFunc...','BSWIMPL_FiM',14,'RTE_TEV_FiM_M'],[38,'Fls_MainFunction','Fls',15,'EV_Fls_MainFun'],[39,'SE_MainFunction','NvM',16,'EV_SE_MainFun'],
[40,'BSWSE_DcmMainFun...','Dcm',17,'EV_Dcm_MainF'],[41,'MemIf_Rb_MainFunct...','MemIf',18,'EV_MemIf_Rb_M'],[42,'BSWSE_MainFunction...','BSWIMPL_Can',19,'BSWTE_MainFu'],[43,'BSWSE_MainFunction...','BSWIMPL_Can',20,'BSWTE_MainFu'],
[44,'BSWSE_MainFunction...','BSWIMPL_Can',21,'BSWTE_MainFu'],[45,'SE_BswM_MainFuncti...','BSWIMPL_BswM',22,'TE_BswM_Main'],[46,'SE_MainFunction','EcuM',23,'TE_EcuM_Main'],[47,'g','OsTask_E2ESW',2,'gfold'],[48,'RE_TestE2E','CPT_E2ESWC',1,'DRE_TestE2E']];
const cell=(s,i,c)=>`<div class="c">${ic(i,10,10,c)}${s}</div>`;
document.getElementById('rows1').innerHTML=rows.map(r=>{const n=r[0],last=n===48;
 if(r[1]==='g')return `<tr><td class="num">${n}</td><td><div class="c"><svg class="tri" viewBox="0 0 8 10"><path d="M7 1v7H0z"/></svg>${ic(r[4],12,12).replace('width="12"','style="width:12px;height:12px" width="12"')}${r[2]}</div></td><td>${r[3]}</td><td></td><td></td><td></td><td></td><td></td></tr>`;
 const cur=n===46?`<svg class="over" style="left:69px;top:3px" width="14" height="20" viewBox="0 0 14 20"><path d="M1 1v11l2.500-2.500L5.500 13l2-1-1.800-3.300H9z" fill="#fff" stroke="#000"/><path d="M3.500 13.500h9v5h-9z" fill="#fff" stroke="#000" stroke-width="1.400" stroke-dasharray="2 1"/></svg>`:'';
 return `<tr><td class="num">${n}</td><td></td><td></td><td class="${cur?'position-relative overflow-visible':''}">${cell(r[1],last?'re':'dia',last?'':'brown')}${cur}</td><td>${cell(r[2],last?'swc':'dia',last?'':'purple')}</td><td class="w">${r[3]}</td><td class="w">0.0</td><td>${cell(r[4],'dia',last?'grey':'green')}</td></tr>`}).join('');

let h='';
for(let i=0;i<21;i++){
 if(i<2)h+=`<tr><td class="num ${i?'':'cur'}">${i+1}</td><td class="${i?'':'sel'}" style="padding-left:11px">${cell('BSWSE_MainFunction','dia','brown')}</td><td>${cell(i?'rba_CryptoHSM':'Csm','dia','purple')}</td><td>${cell('BswTimingEvent','dia','green')}</td><td></td><td></td></tr>`;
 else h+='<tr>'+'<td></td>'.repeat(6)+'</tr>';
}
document.getElementById('rows2').innerHTML=h;
</script>
</body>
</html>
